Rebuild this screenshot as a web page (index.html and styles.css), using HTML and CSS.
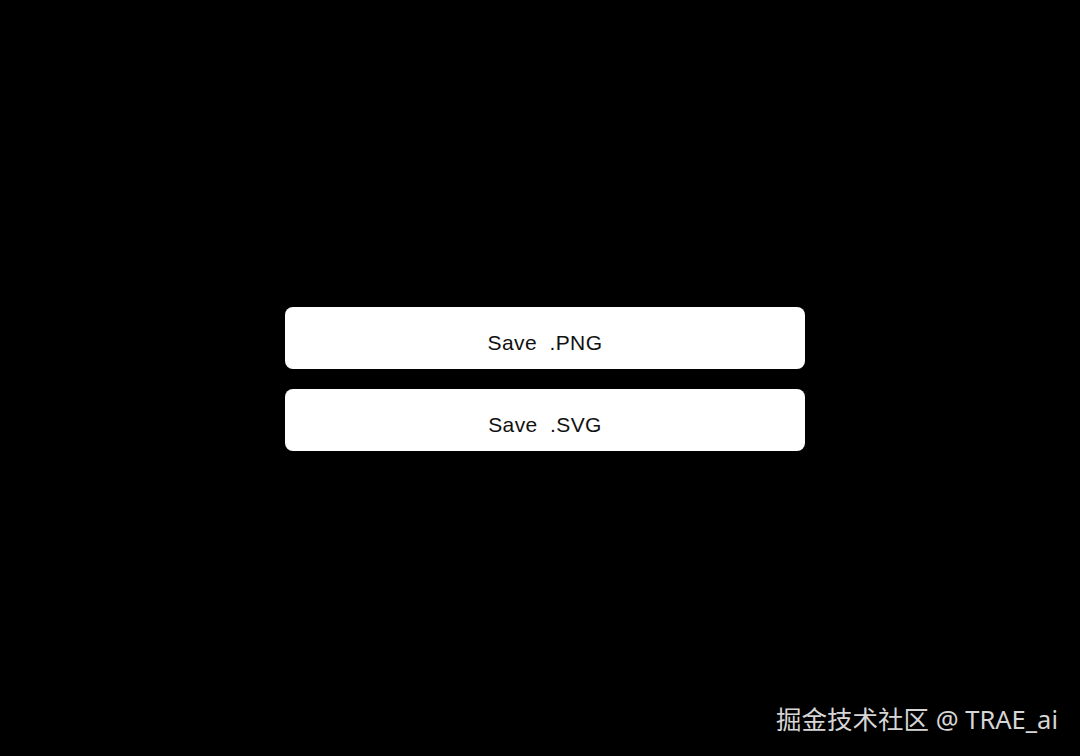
FILE: index.html
```html
<!DOCTYPE html>
<html lang="en">
<head>
<meta charset="utf-8">
<title>Save</title>
<link rel="stylesheet" href="styles.css">
</head>
<body>
<main class="stage">
  <div class="actions">
    <button class="btn">Save&nbsp; .PNG</button>
    <button class="btn">Save&nbsp; .SVG</button>
  </div>
</main>
<div class="watermark">掘金技术社区 @ TRAE_ai</div>
</body>
</html>
```
FILE: styles.css
```css
html, body {
  margin: 0;
  padding: 0;
  background: #000;
  width: 1080px;
  height: 756px;
  overflow: hidden;
}
.stage {
  height: 756px;
  display: flex;
  align-items: center;
  justify-content: center;
  padding-left: 10px;
  padding-top: 2px;
  box-sizing: border-box;
}
.actions {
  display: flex;
  flex-direction: column;
  gap: 20px;
  width: 520px;
}
.btn {
  height: 62px;
  border: none;
  border-radius: 8px;
  background: #fff;
  color: #111;
  font-family: "Liberation Sans", Arial, sans-serif;
  font-size: 21px;
  letter-spacing: 0.4px;
  padding: 10px 0 0 0;
  margin: 0;
}
.watermark {
  position: absolute;
  right: 22px;
  bottom: 24px;
  color: #d6d6d6;
  font-family: "Noto Sans", "Noto Sans CJK SC", sans-serif;
  font-size: 25.5px;
  line-height: 1;
}
```
